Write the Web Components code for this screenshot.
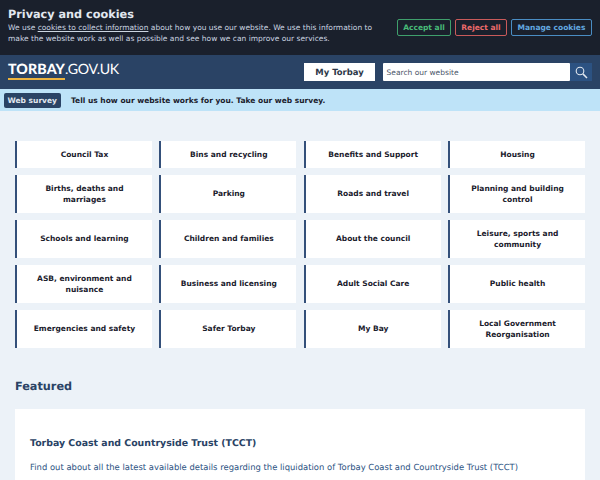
<!DOCTYPE html>
<html lang="en">
<head>
<meta charset="utf-8">
<title>Torbay Council</title>
<style>
  html, body { margin: 0; padding: 0; height: 480px; overflow: hidden; }
  body { background: #ecf2f8; font-family: "DejaVu Sans", sans-serif; text-rendering: geometricPrecision; }
</style>
</head>
<body>
<cookie-bar></cookie-bar>
<site-header></site-header>
<survey-bar></survey-bar>
<main-content></main-content>
<script>
"use strict";
class CookieBar extends HTMLElement {
  constructor() {
    super();
    const shadowRootEl = this.attachShadow({mode: 'open'});
    shadowRootEl.innerHTML = `
      <style>
        :host { display: flex; justify-content: space-between; align-items: flex-start; box-sizing: border-box; height: 55px; padding: 8px 8px 0 8px; background: #1a202c; color: #cbd5e0; }
        .text { width: 372px; }
        h2 { margin: 0 0 1px; font-size: 11.25px; line-height: 13px; color: #e2e8f0; }
        p { margin: 0; font-size: 7.5px; line-height: 11.25px; }
        a { color: inherit; }
        .buttons { display: flex; gap: 4px; margin-top: 11px; }
        button { box-sizing: border-box; font: bold 7.5px "DejaVu Sans", sans-serif; text-rendering: geometricPrecision; height: 17px; padding: 0; background: transparent; border: 1px solid; border-radius: 2px; }
        .accept { width: 54px; color: #48bb78; border-color: #3f9f6c; }
        .reject { width: 52px; color: #ee6b6b; border-color: #c95a5a; }
        .manage { width: 81px; color: #63a9e0; border-color: #4a8dc4; }
      </style>
      <div class="text">
        <h2>Privacy and cookies</h2>
        <p>We use <a href="#">cookies to collect information</a> about how you use our website. We use this information to make the website work as well as possible and see how we can improve our services.</p>
      </div>
      <div class="buttons">
        <button class="accept">Accept all</button>
        <button class="reject">Reject all</button>
        <button class="manage">Manage cookies</button>
      </div>
    `;
  }
}
window.customElements.define('cookie-bar', CookieBar);

class SiteHeader extends HTMLElement {
  constructor() {
    super();
    const shadowRootEl = this.attachShadow({mode: 'open'});
    shadowRootEl.innerHTML = `
      <style>
        :host { display: flex; justify-content: space-between; align-items: center; box-sizing: border-box; height: 34px; padding: 0 8px; background: #2a4365; }
        .logo { font: 14.2px/13px "Lato", sans-serif; color: #fff; display: flex; align-items: flex-start; margin-top: -1px; }
        .logo b { font-weight: 900; padding-bottom: 2px; border-bottom: 2px solid #ecb33e; letter-spacing: .1px; }
        .logo span { letter-spacing: -.3px; }
        .right { display: flex; align-items: center; }
        .my { box-sizing: border-box; width: 71px; height: 18px; margin-right: 7.5px; background: #fff; color: #2d3748; font-size: 8.44px; font-weight: bold; display: flex; align-items: center; justify-content: center; }
        .search { box-sizing: border-box; width: 187.5px; height: 18px; background: #fff; border-radius: 1px; padding-left: 4px; color: #4a5568; font-size: 7.5px; display: flex; align-items: center; }
        .go { width: 22px; height: 18px; background: #2c5282; display: flex; align-items: center; justify-content: center; }
      </style>
      <div class="logo"><b>TORBAY</b><span>.GOV.UK</span></div>
      <div class="right">
        <div class="my">My Torbay</div>
        <div class="search">Search our website</div>
        <div class="go">
          <svg width="13" height="13" viewBox="0 0 13 13" fill="none" stroke="#e2e8f0" stroke-width="1.1"><circle cx="5" cy="5" r="3.8"/><path d="M7.9 7.9L12 12" stroke-width="1.5"/></svg>
        </div>
      </div>
    `;
  }
}
window.customElements.define('site-header', SiteHeader);

class SurveyBar extends HTMLElement {
  constructor() {
    super();
    const shadowRootEl = this.attachShadow({mode: 'open'});
    shadowRootEl.innerHTML = `
      <style>
        :host { display: flex; align-items: center; box-sizing: border-box; height: 22px; padding-left: 4px; background: #bee3f8; font-size: 7.5px; font-weight: bold; color: #1a202c; }
        .tag { box-sizing: border-box; width: 56.5px; height: 15px; margin-right: 10.5px; background: #2a4365; color: #e2e8f0; border-radius: 2px; display: flex; align-items: center; justify-content: center; }
      </style>
      <div class="tag">Web survey</div>
      <div>Tell us how our website works for you. Take our web survey.</div>
    `;
  }
}
window.customElements.define('survey-bar', SurveyBar);

class ServiceLink extends HTMLElement {
  constructor() {
    super();
    const shadowRootEl = this.attachShadow({mode: 'open'});
    shadowRootEl.innerHTML = `
      <style>
        :host { display: flex; align-items: center; justify-content: center; box-sizing: border-box; padding: 0 12px; background: #fff; border-left: 2px solid #34507a; text-align: center; font-size: 7.5px; line-height: 11.25px; font-weight: bold; color: #1a202c; }
      </style>
      <slot></slot>
    `;
  }
}
window.customElements.define('service-link', ServiceLink);

class MainContent extends HTMLElement {
  constructor() {
    super();
    const links = ['Council Tax', 'Bins and recycling', 'Benefits and Support', 'Housing',
      'Births, deaths and marriages', 'Parking', 'Roads and travel', 'Planning and building control',
      'Schools and learning', 'Children and families', 'About the council', 'Leisure, sports and community',
      'ASB, environment and nuisance', 'Business and licensing', 'Adult Social Care', 'Public health',
      'Emergencies and safety', 'Safer Torbay', 'My Bay', 'Local Government Reorganisation'];
    const shadowRootEl = this.attachShadow({mode: 'open'});
    shadowRootEl.innerHTML = `
      <style>
        :host { display: block; padding: 30px 15px 0; }
        .grid { display: grid; grid-template-columns: repeat(4, 1fr); grid-template-rows: 26.75px repeat(4, 38px); gap: 7px 7.5px; }
        h2 { margin: 31px 0 15.5px; font-size: 11.25px; line-height: 15px; color: #2a4365; }
        .card { box-sizing: border-box; background: #fff; padding: 28.5px 15px 0; height: 71px; }
        h3 { margin: 0 0 11.5px; font-size: 9.38px; line-height: 12px; color: #2a4365; }
        p { margin: 0; font-size: 8.44px; line-height: 12px; color: #2c5282; }
      </style>
      <div class="grid">${links.map(l => `<service-link>${l}</service-link>`).join('')}</div>
      <h2>Featured</h2>
      <div class="card">
        <h3>Torbay Coast and Countryside Trust (TCCT)</h3>
        <p>Find out about all the latest available details regarding the liquidation of Torbay Coast and Countryside Trust (TCCT)</p>
      </div>
    `;
  }
}
window.customElements.define('main-content', MainContent);
</script>
</body>
</html>
